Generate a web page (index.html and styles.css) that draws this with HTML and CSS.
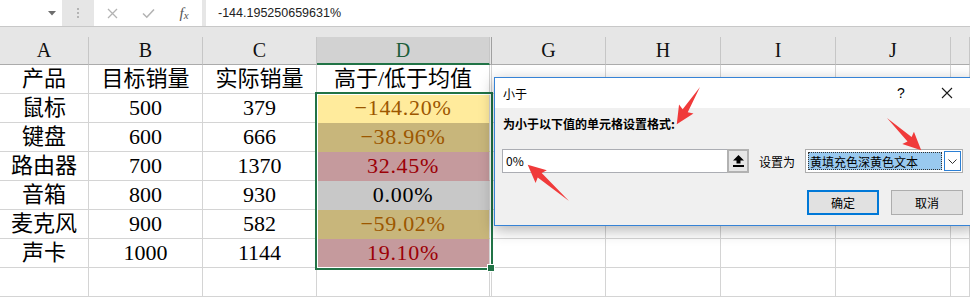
FILE: index.html
```html
<!DOCTYPE html>
<html>
<head>
    <title>条件格式 - 小于</title>
    <link rel="stylesheet" href="styles.css">
</head>
<body>
    <div class="formula-bar">
        <div class="name-box">
            <svg width="8" height="5" viewBox="0 0 8 5"><polygon points="0,0 8,0 4,4.5" fill="#6d6d6d"/></svg>
        </div>
        <div class="grip">
            <svg width="4" height="12" viewBox="0 0 4 12"><circle cx="2" cy="2" r="1" fill="#a3a3a3"/><circle cx="2" cy="6" r="1" fill="#a3a3a3"/><circle cx="2" cy="10" r="1" fill="#a3a3a3"/></svg>
        </div>
        <div class="fx-buttons">
            <span><svg width="11" height="11" viewBox="0 0 11 11"><path d="M1 1 L10 10 M10 1 L1 10" stroke="#b3b3b3" stroke-width="1.3" fill="none"/></svg></span>
            <span><svg width="13" height="11" viewBox="0 0 13 11"><path d="M1 5.5 L4.8 9.2 L12 1.5" stroke="#b3b3b3" stroke-width="1.6" fill="none"/></svg></span>
            <span class="fx"><i>f</i><small>x</small></span>
        </div>
        <div class="bar-gap"></div>
        <div class="formula">-144.195250659631%</div>
    </div>
    <div class="band"></div>

    <div class="sheet">
        <!-- column headers -->
        <div class="hd">A</div>
        <div class="hd">B</div>
        <div class="hd">C</div>
        <div class="hd sel">D</div>
        <div class="hd hidden"></div>
        <div class="hd">G</div>
        <div class="hd">H</div>
        <div class="hd">I</div>
        <div class="hd">J</div>
        <div class="hd"></div>

        <div class="c">产品</div>
        <div class="c">目标销量</div>
        <div class="c">实际销量</div>
        <div class="c">高于/低于均值</div>
        <div class="c hidden"></div>
        <div class="c"></div><div class="c"></div><div class="c"></div><div class="c"></div><div class="c"></div>

        <div class="c">鼠标</div>
        <div class="c">500</div>
        <div class="c">379</div>
        <div class="c pct yellow">−144.20%</div>
        <div class="c hidden"></div>
        <div class="c"></div><div class="c"></div><div class="c"></div><div class="c"></div><div class="c"></div>

        <div class="c">键盘</div>
        <div class="c">600</div>
        <div class="c">666</div>
        <div class="c pct yellow-dim">−38.96%</div>
        <div class="c hidden"></div>
        <div class="c"></div><div class="c"></div><div class="c"></div><div class="c"></div><div class="c"></div>

        <div class="c">路由器</div>
        <div class="c">700</div>
        <div class="c">1370</div>
        <div class="c pct red-dim">32.45%</div>
        <div class="c hidden"></div>
        <div class="c"></div><div class="c"></div><div class="c"></div><div class="c"></div><div class="c"></div>

        <div class="c">音箱</div>
        <div class="c">800</div>
        <div class="c">930</div>
        <div class="c pct gray-dim">0.00%</div>
        <div class="c hidden"></div>
        <div class="c"></div><div class="c"></div><div class="c"></div><div class="c"></div><div class="c"></div>

        <div class="c">麦克风</div>
        <div class="c">900</div>
        <div class="c">582</div>
        <div class="c pct yellow-dim">−59.02%</div>
        <div class="c hidden"></div>
        <div class="c"></div><div class="c"></div><div class="c"></div><div class="c"></div><div class="c"></div>

        <div class="c">声卡</div>
        <div class="c">1000</div>
        <div class="c">1144</div>
        <div class="c pct red-dim">19.10%</div>
        <div class="c hidden"></div>
        <div class="c"></div><div class="c"></div><div class="c"></div><div class="c"></div><div class="c"></div>

        <div class="c"></div><div class="c"></div><div class="c"></div><div class="c"></div>
        <div class="c hidden"></div>
        <div class="c"></div><div class="c"></div><div class="c"></div><div class="c"></div><div class="c"></div>
    </div>

    <!-- selected range D2:D7 -->
    <div class="selection"></div>
    <div class="fill-handle"></div>

    <div class="dialog">
        <div class="dlg-title">
            <span class="dlg-name">小于</span>
            <span class="dlg-btn">?</span>
            <span class="dlg-btn">
                <svg width="12" height="12" viewBox="0 0 12 12"><path d="M1 1 L11 11 M11 1 L1 11" stroke="#1a1a1a" stroke-width="1.1" fill="none"/></svg>
            </span>
        </div>
        <div class="dlg-body">
            <div class="dlg-label">为小于以下值的单元格设置格式:</div>
            <div class="dlg-row">
                <div class="dlg-input">0%</div>
                <div class="ref-btn">
                    <svg width="11" height="12" viewBox="0 0 11 12"><polygon points="5.5,0 0,5.5 3.5,5.5 3.5,8.5 7.5,8.5 7.5,5.5 11,5.5" fill="#000"/><rect x="0" y="10" width="11" height="2" fill="#000"/></svg>
                </div>
                <span class="set-as">设置为</span>
                <div class="select">
                    <span class="select-value">黄填充色深黄色文本</span>
                    <span class="select-arrow">
                        <svg width="9" height="5" viewBox="0 0 9 5"><path d="M0.5 0.5 L4.5 4.5 L8.5 0.5" stroke="#333" stroke-width="1" fill="none"/></svg>
                    </span>
                </div>
            </div>
            <div class="dlg-actions">
                <button class="btn primary">确定</button>
                <button class="btn">取消</button>
            </div>
        </div>
    </div>

    <svg class="arrows" width="970" height="297" viewBox="0 0 970 297">
        <path transform="translate(700 87) rotate(121.9)" d="M0 0 L28 -3 L26 -8.5 L44 0 L26 8.5 L28 3 Z" fill="#f03a3a"/>
        <path transform="translate(887 118) rotate(43.3)" d="M0 0 L31 -3 L29 -8.5 L47 0 L29 8.5 L31 3 Z" fill="#f03a3a"/>
        <path transform="translate(569 201) rotate(-138.7)" d="M0 0 L39 -3 L37 -8.5 L55 0 L37 8.5 L39 3 Z" fill="#f03a3a"/>
    </svg>
</body>
</html>
```

FILE: styles.css
```css
body {
    margin: 0;
    width: 970px;
    height: 297px;
    overflow: hidden;
    background-color: #fff;
    font-family: "Noto Sans CJK SC", sans-serif;
    position: relative;
}

/* formula bar */
.formula-bar {
    display: flex;
    height: 26px;
    background-color: #e6e6e6;
    border-bottom: 1px solid #c8c8c8;
}

.name-box {
    width: 62px;
    background-color: #fff;
    display: flex;
    align-items: center;
    justify-content: flex-end;
    padding-right: 6px;
    box-sizing: border-box;
}

.grip {
    width: 32px;
    display: flex;
    align-items: center;
    justify-content: center;
}

.fx-buttons {
    width: 108px;
    background-color: #fff;
    display: flex;
}

.fx-buttons span {
    width: 36px;
    display: flex;
    align-items: center;
    justify-content: center;
}

.fx {
    font-family: "Liberation Serif", serif;
    font-size: 15px;
    color: #555;
}

.fx small {
    font-size: 11px;
    font-style: italic;
    margin-top: 4px;
}

.bar-gap {
    width: 4px;
}

.formula {
    flex: 1;
    background-color: #fff;
    padding-left: 12px;
    font: 12.5px/26px "Liberation Sans", sans-serif;
    color: #222;
}

.band {
    height: 10px;
    background-color: #e6e6e6;
}

/* sheet grid */
.sheet {
    display: grid;
    grid-template-columns: 89px 114px 114px 173px 2px 114px 115px 115px 115px 1fr;
    grid-template-rows: 28px repeat(8, 29px);
}

.hd {
    background-color: #e6e6e6;
    border-right: 1px solid #c6c6c6;
    border-bottom: 1px solid #ababab;
    font: 20px/27px "Liberation Serif", serif;
    text-align: center;
    color: #111;
}

.hd.sel {
    background-color: #d2d2d2;
    border-bottom: 2px solid #217346;
    line-height: 26px;
    color: #1d5e3a;
}

.hd.hidden {
    border-right: 1px solid #a0a0a0;
}

.c {
    border-right: 1px solid #d4d4d4;
    border-bottom: 1px solid #d4d4d4;
    font: 22px/28px "Liberation Serif", "Noto Sans CJK SC", serif;
    text-align: center;
    color: #000;
    white-space: nowrap;
}

.c.pct {
    letter-spacing: 0.7px;
    border-bottom-color: transparent;
}

.yellow {
    background-color: #ffeb9c;
    color: #9c5700;
}

.yellow-dim {
    background-color: #c8b67b;
    color: #9c5700;
}

.red-dim {
    background-color: #c59a9d;
    color: #9c0006;
}

.gray-dim {
    background-color: #c8c8c8;
}

.selection {
    position: absolute;
    left: 315px;
    top: 92px;
    width: 178px;
    height: 178px;
    box-sizing: border-box;
    border: 2px solid #217346;
    box-shadow: inset 0 0 0 1px #fff;
}

.fill-handle {
    position: absolute;
    left: 487px;
    top: 264px;
    width: 6px;
    height: 6px;
    background-color: #217346;
    border: 1px solid #fff;
}

/* dialog */
.dialog {
    position: absolute;
    left: 494px;
    top: 77px;
    width: 482px;
    height: 149px;
    box-sizing: border-box;
    border: 1px solid #3683d6;
    background-color: #f0f0f0;
    box-shadow: 0 4px 14px rgba(0, 0, 0, 0.3);
    display: flex;
    flex-direction: column;
    font-size: 12px;
    color: #000;
}

.dlg-title {
    height: 30px;
    background-color: #fff;
    display: flex;
    align-items: center;
    padding-right: 5px;
}

.dlg-name {
    flex: 1;
    padding-left: 8px;
}

.dlg-btn {
    width: 46px;
    display: flex;
    justify-content: center;
    font: 14px "Liberation Sans", sans-serif;
}

.dlg-body {
    padding: 8px 7px 0;
}

.dlg-label {
    font-weight: bold;
    line-height: 16px;
    padding-left: 1px;
}

.dlg-row {
    display: flex;
    align-items: center;
    margin-top: 17px;
    height: 24px;
}

.dlg-input {
    width: 226px;
    height: 24px;
    box-sizing: border-box;
    border: 1px solid #abadb3;
    background-color: #fff;
    padding-left: 3px;
    line-height: 22px;
}

.ref-btn {
    width: 22px;
    height: 24px;
    margin-left: -1px;
    box-sizing: border-box;
    border: 2px solid #b2b2b2;
    background-color: #e6e6e6;
    display: flex;
    align-items: center;
    justify-content: center;
}

.set-as {
    margin: 0 10px;
}

.select {
    width: 158px;
    height: 24px;
    box-sizing: border-box;
    border: 1px solid #adadad;
    background-color: #fff;
    padding: 1px;
    display: flex;
}

.select-value {
    flex: 1;
    background-color: #99c9ef;
    outline: 1px dotted #333;
    outline-offset: -1px;
    padding-left: 2px;
    line-height: 20px;
    margin: 1px 2px 1px 1px;
}

.select-arrow {
    width: 17px;
    box-sizing: border-box;
    border: 1px solid #2b7fd4;
    background-color: #fff;
    display: flex;
    align-items: center;
    justify-content: center;
}

.dlg-actions {
    display: flex;
    justify-content: flex-end;
    gap: 12px;
    width: 461px;
    margin-top: 17px;
}

.btn {
    width: 72px;
    height: 25px;
    background-color: #e1e1e1;
    border: 1px solid #adadad;
    font: 12px "Noto Sans CJK SC", sans-serif;
    color: #000;
    padding: 0;
}

.btn.primary {
    border: 2px solid #0078d7;
}

.arrows {
    position: absolute;
    left: 0;
    top: 0;
    pointer-events: none;
}
```
